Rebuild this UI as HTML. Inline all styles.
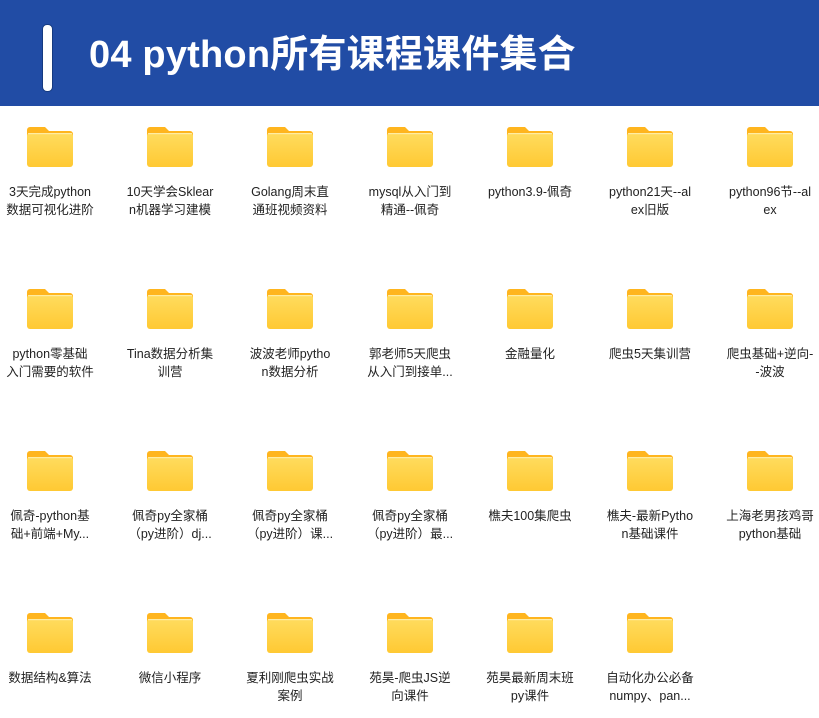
<!DOCTYPE html>
<html><head><meta charset="utf-8"><style>
body{margin:0;width:819px;height:718px;background:#fff;overflow:hidden;font-family:"Liberation Sans","Noto Sans CJK SC",sans-serif;position:relative}
.hd{position:absolute;left:0;top:0;width:819px;height:106px;background:#214ca5}
.bar{position:absolute;left:42px;top:24px;width:9px;height:66px;background:#fff;border:1px solid #153a80;border-radius:5px}
.tt{position:absolute;left:89px;top:29px;color:#fff;font-weight:bold;font-size:38px;letter-spacing:0.2px;line-height:52px;white-space:nowrap;font-family:"Liberation Sans","Noto Sans CJK SC",sans-serif}
.it{position:absolute;width:100px;text-align:center}
.f{position:absolute;left:27px;top:0;width:46px;height:40px}
.lb{position:absolute;left:-10px;top:56px;width:120px;font-size:12.5px;line-height:18px;color:#222;text-align:center}
</style></head><body>
<div class="hd"><div class="bar"></div><div class="tt">04 python所有课程课件集合</div></div>
<svg width="0" height="0" style="position:absolute"><defs><linearGradient id="g" x1="0" y1="0" x2="0" y2="1"><stop offset="0" stop-color="#ffdc5e"/><stop offset="1" stop-color="#ffc933"/></linearGradient></defs></svg>
<div id="c"></div>
<script>
var L=[["3天完成python","数据可视化进阶"],["10天学会Sklear","n机器学习建模"],["Golang周末直","通班视频资料"],["mysql从入门到","精通--佩奇"],["python3.9-佩奇",""],["python21天--al","ex旧版"],["python96节--al","ex"],
["python零基础","入门需要的软件"],["Tina数据分析集","训营"],["波波老师pytho","n数据分析"],["郭老师5天爬虫","从入门到接单..."],["金融量化",""],["爬虫5天集训营",""],["爬虫基础+逆向-","-波波"],
["佩奇-python基","础+前端+My..."],["佩奇py全家桶","（py进阶）dj..."],["佩奇py全家桶","（py进阶）课..."],["佩奇py全家桶","（py进阶）最..."],["樵夫100集爬虫",""],["樵夫-最新Pytho","n基础课件"],["上海老男孩鸡哥","python基础"],
["数据结构&算法",""],["微信小程序",""],["夏利刚爬虫实战","案例"],["苑昊-爬虫JS逆","向课件"],["苑昊最新周末班","py课件"],["自动化办公必备","numpy、pan..."]];
var h="";
L.forEach(function(t,i){var c=i%7,r=Math.floor(i/7);
h+='<div class="it" style="left:'+(c*120)+'px;top:'+(127+r*162)+'px"><svg class="f" viewBox="0 0 46 40"><path d="M0 3a3 3 0 0 1 3-3h15l4 4h21a3 3 0 0 1 3 3v28H0z" fill="#ffb51e"/><rect x="0" y="6" width="46" height="34" rx="3" fill="url(#g)"/><rect x="1" y="6" width="44" height="1.2" fill="#fff3c0" opacity=".7"/></svg><div class="lb">'+t[0]+(t[1]?'<br>'+t[1]:'')+'</div></div>';});
document.getElementById("c").innerHTML=h;
</script>
</body></html>
